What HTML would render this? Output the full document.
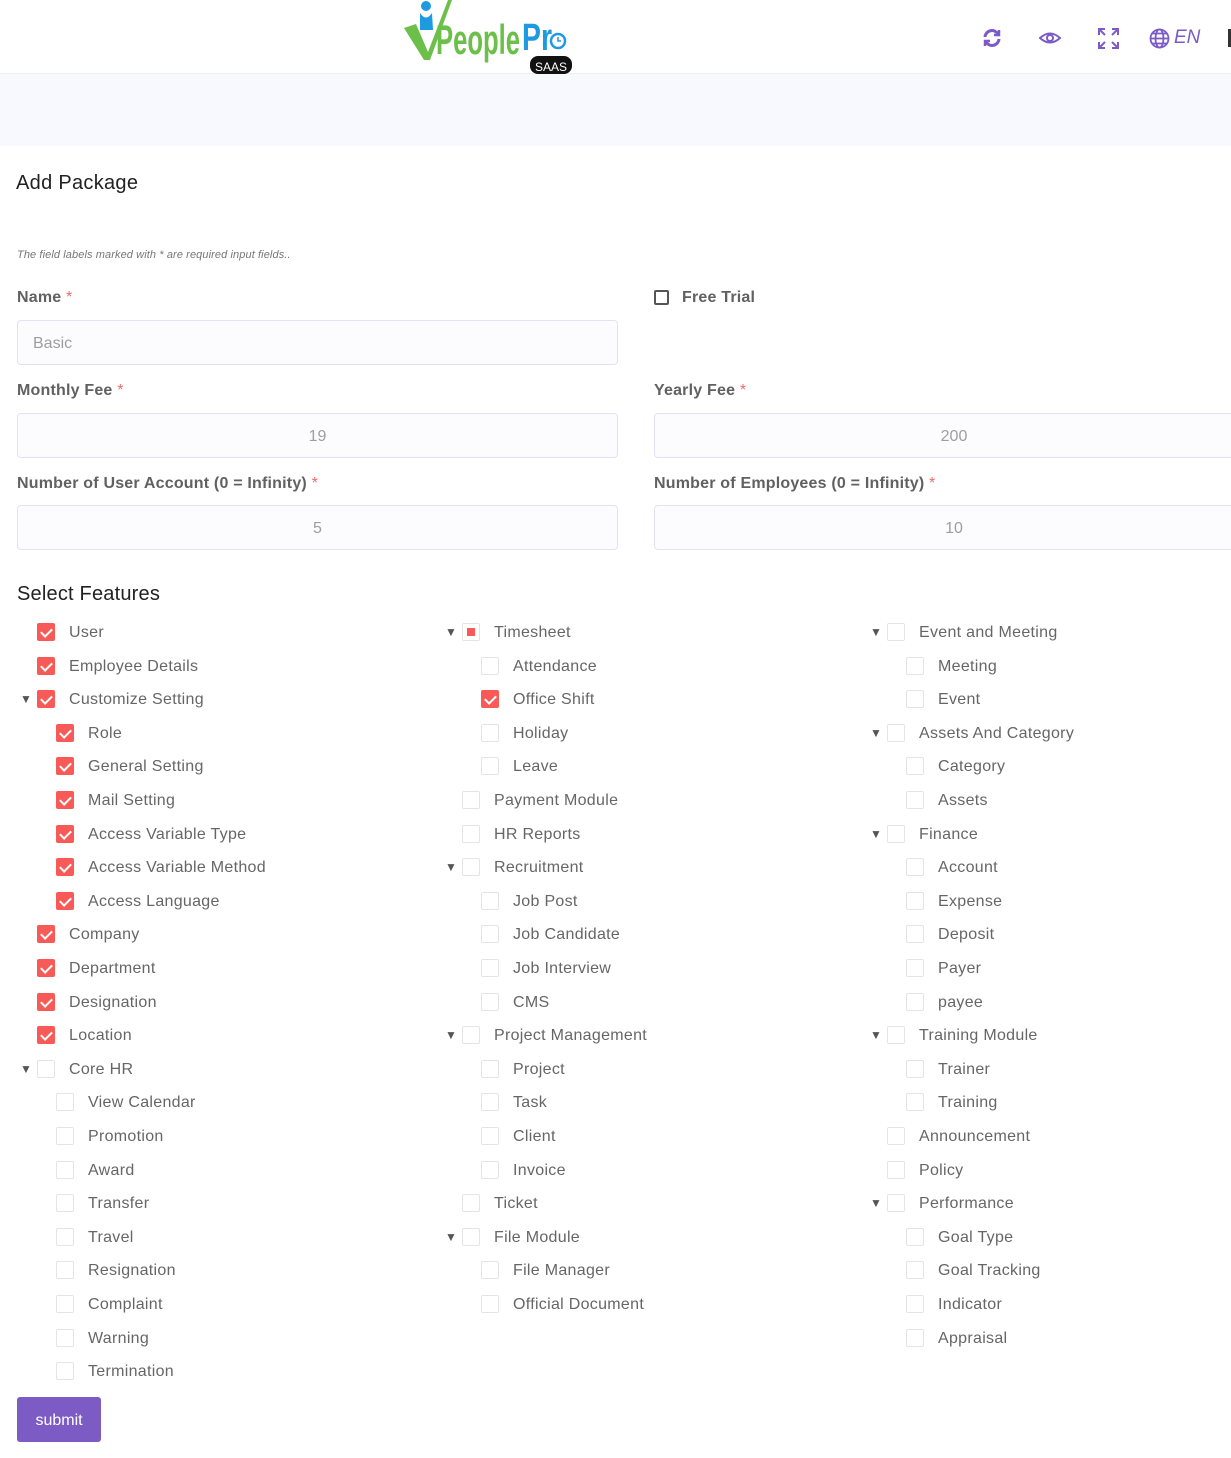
<!DOCTYPE html>
<html><head><meta charset="utf-8"><style>
*{box-sizing:border-box;margin:0;padding:0}
body{width:1231px;height:1458px;background:#fff;font-family:"Liberation Sans",Arial,sans-serif;position:relative;overflow:hidden;color:#555}
.hdr{position:absolute;left:0;top:0;width:1231px;height:74px;background:#fff;border-bottom:1px solid #eef0f5}
.band{position:absolute;left:0;top:74px;width:1231px;height:72px;background:#f8f9fe}
.a{position:absolute}
.lbl{position:absolute;font-weight:bold;font-size:16px;color:#616161;margin-top:1px;letter-spacing:0.2px}
.lbl b{color:#f06a6a;font-weight:normal}
.inp{position:absolute;height:45px;border:1px solid #e4e1f7;border-radius:4px;background:#fcfcfe;font-size:16px;color:#9e9e9e;line-height:45px}
.i{position:absolute;height:20px;line-height:20px;font-size:16px;color:#666;white-space:nowrap;margin-top:2px;letter-spacing:0.3px}
.cb{display:inline-block;width:18px;height:18px;border:1px solid #e4e4e4;border-radius:2px;vertical-align:middle;margin-right:14px;position:relative;top:-1px;background:#fff}
.cb.c{background:#f85b57;border-color:#f85b57}
.cb.c:after{content:"";position:absolute;left:5px;top:2px;width:5px;height:9px;border:solid #fff;border-width:0 2px 2px 0;transform:rotate(45deg)}
.cb.p:after{content:"";position:absolute;left:4px;top:4px;width:8px;height:8px;background:#f85b57}
.ar{position:absolute;left:-17px;top:-1px;font-size:12px;color:#555}
</style></head><body>
<div class="hdr"></div>
<div class="band"></div>
<svg class="a" style="left:400px;top:0" width="180" height="76" viewBox="0 0 180 76">
<circle cx="26" cy="6" r="5" fill="#1e9be0"/>
<path d="M20 13 Q26 22 32 13 L33 30 L20 30Z" fill="#1e9be0"/>
<path d="M4 28 L16 24 L28 52 L48 0 L52 0 L30 60 L24 60Z" fill="#6cc04a"/>
<text x="36" y="54" font-family="Liberation Sans Narrow,Liberation Sans,sans-serif" font-size="42" font-weight="bold" fill="#6cc04a" textLength="84" lengthAdjust="spacingAndGlyphs">People</text>
<text x="122" y="50" font-family="Liberation Sans Narrow,Liberation Sans,sans-serif" font-size="38" font-weight="bold" fill="#1e9be0" textLength="30" lengthAdjust="spacingAndGlyphs">Pr</text>
<circle cx="158" cy="41" r="7" fill="none" stroke="#1e9be0" stroke-width="2.5"/>
<path d="M158 37V41H161" stroke="#1e9be0" stroke-width="1.5" fill="none"/>
<rect x="130" y="56" width="42" height="18" rx="8" fill="#111"/>
<text x="151" y="71" text-anchor="middle" font-size="12" fill="#fff" font-family="Liberation Sans,sans-serif">SAAS</text>
</svg>
<svg class="a" style="left:982px;top:28px" width="20" height="20" viewBox="0 0 20 20" fill="none" stroke="#7b5bc7" stroke-width="3"><path d="M3 9 A7 7 0 0 1 16 6"/><path d="M17 11 A7 7 0 0 1 4 14"/><path d="M17 2 V7 H12" stroke-width="2.5"/><path d="M3 18 V13 H8" stroke-width="2.5"/></svg>
<svg class="a" style="left:1039px;top:29px" width="22" height="18" viewBox="0 0 22 18" fill="none" stroke="#7b5bc7" stroke-width="2"><path d="M1 9 Q11 0 21 9 Q11 18 1 9Z"/><circle cx="11" cy="9" r="3"/></svg>
<svg class="a" style="left:1098px;top:28px" width="21" height="21" viewBox="0 0 21 21" fill="none" stroke="#7b5bc7" stroke-width="2"><path d="M1 7V1H7M1 1L7 7M14 1H20V7M20 1L14 7M1 14V20H7M1 20L7 14M20 14V20H14M20 20L14 14"/></svg>
<svg class="a" style="left:1149px;top:28px" width="21" height="21" viewBox="0 0 21 21" fill="none" stroke="#7b5bc7" stroke-width="1.8"><circle cx="10.5" cy="10.5" r="9"/><ellipse cx="10.5" cy="10.5" rx="4" ry="9"/><path d="M1.5 10.5H19.5M3 5.5H18M3 15.5H18"/></svg>
<div class="a" style="left:1174px;top:27px;font-size:19px;font-style:italic;color:#7b5bc7">EN</div>
<div class="a" style="left:1228px;top:29px;width:3px;height:18px;background:#333"></div>

<div class="a" style="left:16px;top:172px;font-size:20px;color:#222;letter-spacing:0.3px">Add Package</div>
<div class="a" style="left:17px;top:249px;font-size:11px;font-style:italic;color:#777;letter-spacing:0.1px">The field labels marked with * are required input fields..</div>

<div class="lbl" style="left:17px;top:288px">Name <b>*</b></div>
<div class="inp" style="left:17px;top:320px;width:601px;padding-left:15px">Basic</div>
<div class="a" style="left:654px;top:290px;width:15px;height:15px;border:2px solid #555;border-radius:2px"></div>
<div class="lbl" style="left:682px;top:288px">Free Trial</div>

<div class="lbl" style="left:17px;top:381px">Monthly Fee <b>*</b></div>
<div class="inp" style="left:17px;top:413px;width:601px;text-align:center">19</div>
<div class="lbl" style="left:654px;top:381px">Yearly Fee <b>*</b></div>
<div class="inp" style="left:654px;top:413px;width:600px;text-align:center">200</div>

<div class="lbl" style="left:17px;top:474px">Number of User Account (0 = Infinity) <b>*</b></div>
<div class="inp" style="left:17px;top:505px;width:601px;text-align:center">5</div>
<div class="lbl" style="left:654px;top:474px">Number of Employees (0 = Infinity) <b>*</b></div>
<div class="inp" style="left:654px;top:505px;width:600px;text-align:center">10</div>

<div class="a" style="left:17px;top:583px;font-size:20px;color:#222;letter-spacing:0.2px">Select Features</div>

<div class="i" style="left:37px;top:621px"><span class="cb c"></span>User</div>
<div class="i" style="left:37px;top:655px"><span class="cb c"></span>Employee Details</div>
<div class="i" style="left:37px;top:688px"><span class="ar">▼</span><span class="cb c"></span>Customize Setting</div>
<div class="i" style="left:56px;top:722px"><span class="cb c"></span>Role</div>
<div class="i" style="left:56px;top:755px"><span class="cb c"></span>General Setting</div>
<div class="i" style="left:56px;top:789px"><span class="cb c"></span>Mail Setting</div>
<div class="i" style="left:56px;top:823px"><span class="cb c"></span>Access Variable Type</div>
<div class="i" style="left:56px;top:856px"><span class="cb c"></span>Access Variable Method</div>
<div class="i" style="left:56px;top:890px"><span class="cb c"></span>Access Language</div>
<div class="i" style="left:37px;top:923px"><span class="cb c"></span>Company</div>
<div class="i" style="left:37px;top:957px"><span class="cb c"></span>Department</div>
<div class="i" style="left:37px;top:991px"><span class="cb c"></span>Designation</div>
<div class="i" style="left:37px;top:1024px"><span class="cb c"></span>Location</div>
<div class="i" style="left:37px;top:1058px"><span class="ar">▼</span><span class="cb"></span>Core HR</div>
<div class="i" style="left:56px;top:1091px"><span class="cb"></span>View Calendar</div>
<div class="i" style="left:56px;top:1125px"><span class="cb"></span>Promotion</div>
<div class="i" style="left:56px;top:1159px"><span class="cb"></span>Award</div>
<div class="i" style="left:56px;top:1192px"><span class="cb"></span>Transfer</div>
<div class="i" style="left:56px;top:1226px"><span class="cb"></span>Travel</div>
<div class="i" style="left:56px;top:1259px"><span class="cb"></span>Resignation</div>
<div class="i" style="left:56px;top:1293px"><span class="cb"></span>Complaint</div>
<div class="i" style="left:56px;top:1327px"><span class="cb"></span>Warning</div>
<div class="i" style="left:56px;top:1360px"><span class="cb"></span>Termination</div>

<div class="i" style="left:462px;top:621px"><span class="ar">▼</span><span class="cb p"></span>Timesheet</div>
<div class="i" style="left:481px;top:655px"><span class="cb"></span>Attendance</div>
<div class="i" style="left:481px;top:688px"><span class="cb c"></span>Office Shift</div>
<div class="i" style="left:481px;top:722px"><span class="cb"></span>Holiday</div>
<div class="i" style="left:481px;top:755px"><span class="cb"></span>Leave</div>
<div class="i" style="left:462px;top:789px"><span class="cb"></span>Payment Module</div>
<div class="i" style="left:462px;top:823px"><span class="cb"></span>HR Reports</div>
<div class="i" style="left:462px;top:856px"><span class="ar">▼</span><span class="cb"></span>Recruitment</div>
<div class="i" style="left:481px;top:890px"><span class="cb"></span>Job Post</div>
<div class="i" style="left:481px;top:923px"><span class="cb"></span>Job Candidate</div>
<div class="i" style="left:481px;top:957px"><span class="cb"></span>Job Interview</div>
<div class="i" style="left:481px;top:991px"><span class="cb"></span>CMS</div>
<div class="i" style="left:462px;top:1024px"><span class="ar">▼</span><span class="cb"></span>Project Management</div>
<div class="i" style="left:481px;top:1058px"><span class="cb"></span>Project</div>
<div class="i" style="left:481px;top:1091px"><span class="cb"></span>Task</div>
<div class="i" style="left:481px;top:1125px"><span class="cb"></span>Client</div>
<div class="i" style="left:481px;top:1159px"><span class="cb"></span>Invoice</div>
<div class="i" style="left:462px;top:1192px"><span class="cb"></span>Ticket</div>
<div class="i" style="left:462px;top:1226px"><span class="ar">▼</span><span class="cb"></span>File Module</div>
<div class="i" style="left:481px;top:1259px"><span class="cb"></span>File Manager</div>
<div class="i" style="left:481px;top:1293px"><span class="cb"></span>Official Document</div>

<div class="i" style="left:887px;top:621px"><span class="ar">▼</span><span class="cb"></span>Event and Meeting</div>
<div class="i" style="left:906px;top:655px"><span class="cb"></span>Meeting</div>
<div class="i" style="left:906px;top:688px"><span class="cb"></span>Event</div>
<div class="i" style="left:887px;top:722px"><span class="ar">▼</span><span class="cb"></span>Assets And Category</div>
<div class="i" style="left:906px;top:755px"><span class="cb"></span>Category</div>
<div class="i" style="left:906px;top:789px"><span class="cb"></span>Assets</div>
<div class="i" style="left:887px;top:823px"><span class="ar">▼</span><span class="cb"></span>Finance</div>
<div class="i" style="left:906px;top:856px"><span class="cb"></span>Account</div>
<div class="i" style="left:906px;top:890px"><span class="cb"></span>Expense</div>
<div class="i" style="left:906px;top:923px"><span class="cb"></span>Deposit</div>
<div class="i" style="left:906px;top:957px"><span class="cb"></span>Payer</div>
<div class="i" style="left:906px;top:991px"><span class="cb"></span>payee</div>
<div class="i" style="left:887px;top:1024px"><span class="ar">▼</span><span class="cb"></span>Training Module</div>
<div class="i" style="left:906px;top:1058px"><span class="cb"></span>Trainer</div>
<div class="i" style="left:906px;top:1091px"><span class="cb"></span>Training</div>
<div class="i" style="left:887px;top:1125px"><span class="cb"></span>Announcement</div>
<div class="i" style="left:887px;top:1159px"><span class="cb"></span>Policy</div>
<div class="i" style="left:887px;top:1192px"><span class="ar">▼</span><span class="cb"></span>Performance</div>
<div class="i" style="left:906px;top:1226px"><span class="cb"></span>Goal Type</div>
<div class="i" style="left:906px;top:1259px"><span class="cb"></span>Goal Tracking</div>
<div class="i" style="left:906px;top:1293px"><span class="cb"></span>Indicator</div>
<div class="i" style="left:906px;top:1327px"><span class="cb"></span>Appraisal</div>

<div class="a" style="left:17px;top:1397px;width:84px;height:45px;background:#7c5cc4;border-radius:3px;color:#fff;font-size:16px;line-height:47px;text-align:center">submit</div>
</body></html>
